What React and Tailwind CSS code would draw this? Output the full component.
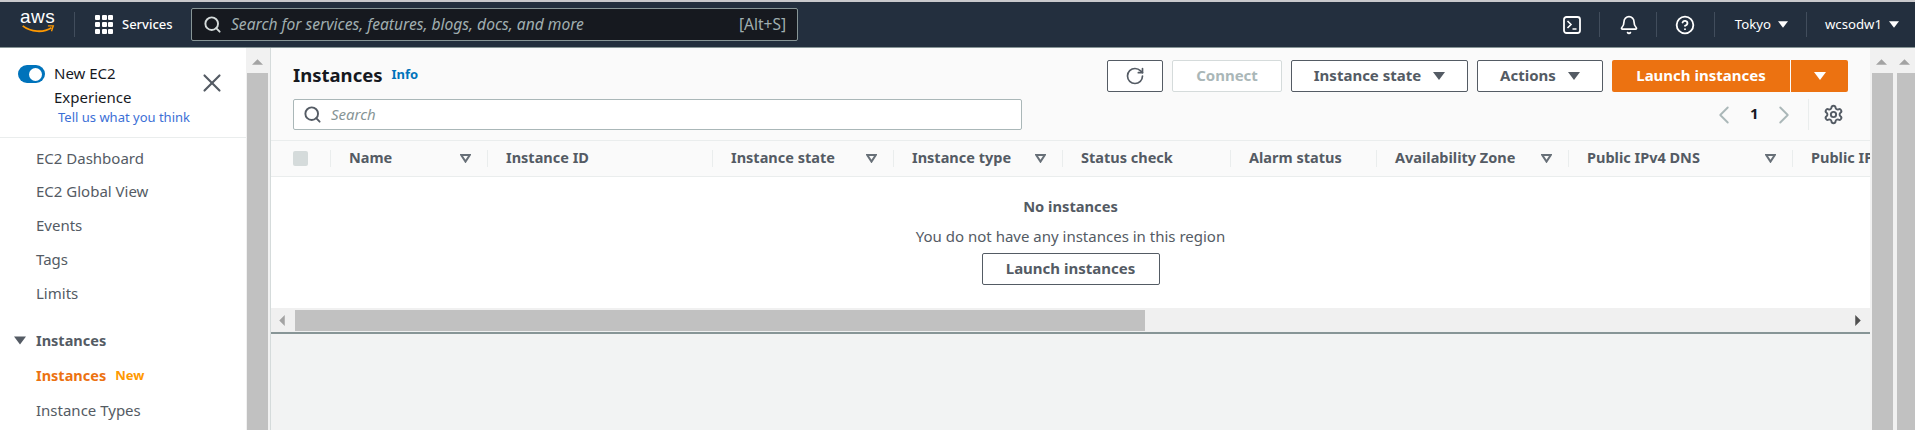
import { ChevronLeft, ChevronRight, Search, Settings, RotateCw, X, Bell, CircleHelp } from 'lucide-react'

const navLinks = ['EC2 Dashboard', 'EC2 Global View', 'Events', 'Tags', 'Limits']

const columns = [
  { label: 'Name', w: 'w-[157px]', filter: true },
  { label: 'Instance ID', w: 'w-[225px]' },
  { label: 'Instance state', w: 'w-[181px]', filter: true },
  { label: 'Instance type', w: 'w-[169px]', filter: true },
  { label: 'Status check', w: 'w-[168px]' },
  { label: 'Alarm status', w: 'w-[146px]' },
  { label: 'Availability Zone', w: 'w-[192px]', filter: true },
  { label: 'Public IPv4 DNS', w: 'w-[224px]', filter: true },
  { label: 'Public IPv4 address', w: 'w-[200px]' },
]

function Caret({ className = 'w-[12px] h-[8px] text-white' }) {
  return (
    <svg viewBox="0 0 12 8" className={className}>
      <path d="M0 0h12L6 8z" fill="currentColor" />
    </svg>
  )
}

function FilterCaret() {
  return (
    <svg viewBox="0 0 11 9" className="w-[11px] h-[9px] shrink-0">
      <path d="M1.2 1h8.6L5.5 7.6z" fill="none" stroke="#687078" strokeWidth="2" />
    </svg>
  )
}

function Scrollbar({ w, thumb, className = '' }) {
  return (
    <div className={`${w} ${className} shrink-0 flex flex-col`}>
      <div className="h-[25px] flex items-center justify-center pt-[2px]">
        <svg viewBox="0 0 12 6" className="w-[11px] h-[6px]">
          <path d="M6 0l6 6H0z" fill="#a3a3a3" />
        </svg>
      </div>
      <div className={`flex-1 ${thumb} bg-[#c1c1c1]`} />
    </div>
  )
}

function NavSep() {
  return <div className="w-px h-[25px] bg-[#414d5c]" />
}

function OutlineButton({ children, className = '' }) {
  return (
    <button className={`h-[32px] pb-[1px] border border-[#545b64] rounded-[2px] bg-white font-bold text-[#545b64] flex items-center justify-center ${className}`}>
      {children}
    </button>
  )
}

export default function App() {
  return (
    <div className="h-[430px] overflow-hidden flex flex-col font-['Noto_Sans',sans-serif] text-[15px] text-[#545b64] bg-[#f1f1f1]">
      <div className="h-[2px] bg-[#c9c9cc]" />

      {/* Top nav */}
      <header className="h-[46px] shrink-0 bg-[#232f3e] border-b border-[#879596] flex items-center text-white">
        <div className="w-[74px] pl-[20px] flex flex-col items-start">
          <span className="text-[19px] leading-[16px] font-['Liberation_Sans',sans-serif] tracking-[0.5px] -mt-[6px]">aws</span>
          <svg viewBox="0 0 36 10" className="w-[36px] h-[9px]">
            <path d="M1 1c9 7 23 8 32 2" fill="none" stroke="#ff9900" strokeWidth="2" />
            <path d="M29 1l6 0-2 6" fill="none" stroke="#ff9900" strokeWidth="1.5" />
          </svg>
        </div>
        <NavSep />
        <div className="ml-[20px] grid grid-cols-3 gap-[2px] w-[18px]">
          {Array.from({ length: 9 }).map((_, i) => (
            <div key={i} className="w-[5px] h-[5px] bg-white rounded-[1px]" />
          ))}
        </div>
        <span className="ml-[9px] text-[13px] font-medium w-[50px]">Services</span>
        <div className="ml-[19px] w-[607px] h-[33px] bg-[#16191f] border border-[#879596] rounded-[2px] flex items-center pl-[11px] pr-[11px]">
          <Search size={19} strokeWidth={2.4} className="text-[#d5dbdb]" />
          <span className="ml-[9px] italic text-[15.6px] text-[#a0aeb0]">Search for services, features, blogs, docs, and more</span>
          <span className="ml-auto text-[15.5px] text-[#a0aeb0]">[Alt+S]</span>
        </div>

        <div className="ml-auto flex items-center">
          <svg viewBox="0 0 18 18" className="w-[18px] h-[18px]">
            <rect x="1" y="1" width="16" height="16" rx="2.5" fill="none" stroke="#fff" strokeWidth="1.8" />
            <path d="M4.5 5l3.5 3.5-3.5 3.5M9.5 13h4" fill="none" stroke="#fff" strokeWidth="1.6" />
          </svg>
          <div className="ml-[18px]"><NavSep /></div>
          <Bell size={20} strokeWidth={2} className="ml-[19px]" />
          <div className="ml-[17px]"><NavSep /></div>
          <CircleHelp size={20} strokeWidth={2.2} className="ml-[18px]" />
          <div className="ml-[19px]"><NavSep /></div>
          <span className="ml-[20px] text-[13.2px]">Tokyo</span>
          <Caret className="ml-[7px] w-[10px] h-[7px] text-white" />
          <div className="ml-[18px]"><NavSep /></div>
          <span className="ml-[18px] text-[13.2px]">wcsodw1</span>
          <Caret className="ml-[7px] mr-[16px] w-[10px] h-[7px] text-white" />
        </div>
      </header>

      <div className="flex-1 flex min-h-0">
        {/* Sidebar */}
        <aside className="w-[246px] shrink-0 bg-white">
          <div className="h-[90px] border-b border-[#eaeded] relative">
            <div className="flex pl-[18px] pt-[17px]">
              <div className="w-[27px] h-[18px] rounded-full bg-[#0073bb] flex items-center justify-end pr-[3px]">
                <div className="w-[13px] h-[13px] rounded-full bg-white" />
              </div>
              <div className="ml-[9px] text-[#16191f] leading-[24px] -mt-[4px]">New EC2<br />Experience</div>
            </div>
            <X size={30} strokeWidth={1.7} className="absolute left-[197px] top-[20px] text-[#545b64]" />
            <div className="pl-[58px] text-[13px] leading-[18px] text-[#3b6fd6] -mt-[1px]">Tell us what you think</div>
          </div>
          <nav className="pt-[3px]">
            {navLinks.map(label => (
              <div key={label} className="h-[33.8px] pl-[36px] flex items-center">{label}</div>
            ))}
            <div className="mt-[14px] h-[34px] flex items-center font-bold text-[14.5px]">
              <Caret className="ml-[14px] w-[12px] h-[9px] text-[#545b64]" />
              <span className="ml-[10px]">Instances</span>
            </div>
            <div className="h-[35px] pl-[36px] flex items-center font-bold text-[14.5px] text-[#ec7211]">
              Instances
              <span className="ml-[9px] text-[13px] text-[#ff9900]">New</span>
            </div>
            <div className="h-[34px] pl-[36px] flex items-center">Instance Types</div>
          </nav>
        </aside>

        <Scrollbar w="w-[23px]" thumb="mx-px" />
        <div className="w-px shrink-0" />
        <div className="w-px shrink-0 bg-[#d5dbdb]" />

        {/* Main panel */}
        <main className="w-[1599px] shrink-0 flex flex-col bg-[#f2f3f3]">
          <div className="h-[93px] shrink-0 bg-[#fafafa] border-b border-[#eaeded] flex justify-between px-[22px] pt-[12px]">
            <div>
              <div className="h-[32px] flex items-center -mt-[1px]">
                <h1 className="text-[18.5px] font-bold text-[#16191f]">Instances</h1>
                <span className="ml-[9px] text-[13px] font-bold text-[#0073bb]">Info</span>
              </div>
              <div className="mt-[8px] w-[729px] h-[31px] bg-white border border-[#aab7b8] rounded-[2px] flex items-center pl-[9px]">
                <Search size={19} strokeWidth={2.4} className="text-[#545b64]" />
                <span className="ml-[9px] italic text-[#879596]">Search</span>
              </div>
            </div>
            <div className="flex flex-col items-end">
              <div className="flex">
                <OutlineButton className="w-[56px]"><RotateCw size={20} strokeWidth={2} /></OutlineButton>
                <button className="ml-[9px] w-[110px] h-[32px] pb-[1px] border border-[#d5dbdb] rounded-[2px] bg-white font-bold text-[#aab7b8]">Connect</button>
                <OutlineButton className="ml-[9px] w-[177px]">
                  Instance state
                  <Caret className="ml-[12px] w-[12px] h-[8px] text-[#545b64]" />
                </OutlineButton>
                <OutlineButton className="ml-[9px] w-[126px]">
                  Actions
                  <Caret className="ml-[12px] w-[12px] h-[8px] text-[#545b64]" />
                </OutlineButton>
                <button className="ml-[9px] w-[178px] h-[32px] pb-[1px] rounded-l-[2px] bg-[#ec7211] font-bold text-white">Launch instances</button>
                <button className="ml-px w-[57px] h-[32px] rounded-r-[2px] bg-[#ec7211] flex items-center justify-center">
                  <Caret className="w-[12px] h-[8px] text-white" />
                </button>
              </div>
              <div className="mt-[7px] flex items-center h-[31px] text-[#16191f] pr-[4px]">
                <ChevronLeft size={30} strokeWidth={1.5} className="text-[#aab7b8]" />
                <span className="mx-[11px] w-[8px] pb-[2px] font-bold text-center">1</span>
                <ChevronRight size={30} strokeWidth={1.5} className="text-[#aab7b8]" />
                <div className="ml-[9px] w-px h-[31px] bg-[#eaeded]" />
                <Settings size={21} strokeWidth={2.2} className="ml-[14px] text-[#545b64]" />
              </div>
            </div>
          </div>

          {/* Table header */}
          <div className="h-[36px] shrink-0 bg-[#fafafa] border-b border-[#eaeded] flex items-center overflow-hidden text-[14.5px]">
            <div className="w-[60px] shrink-0 pl-[22px] pr-[22px] h-[17px] border-r border-[#eaeded] flex items-center">
              <div className="w-[15px] h-[15px] bg-[#d5dbdb] rounded-[2px]" />
            </div>
            {columns.map(col => (
              <div key={col.label} className={`${col.w} shrink-0 h-[17px] pl-[18px] pr-[16px] border-r border-[#eaeded] flex items-center justify-between font-bold whitespace-nowrap`}>
                <span className="-mt-[1px]">{col.label}</span>
                {col.filter && <FilterCaret />}
              </div>
            ))}
          </div>

          {/* Empty state */}
          <div className="h-[131px] shrink-0 bg-white flex flex-col items-center pt-[19px]">
            <p className="h-[20px] leading-[20px] font-bold text-[14.7px]">No instances</p>
            <p className="mt-[10px] h-[20px] leading-[20px]">You do not have any instances in this region</p>
            <OutlineButton className="mt-[7px] w-[178px]">Launch instances</OutlineButton>
          </div>

          {/* Horizontal scrollbar */}
          <div className="h-[26px] shrink-0 bg-[#f0f0f0] border-b-2 border-[#879596] flex items-center pt-[1px]">
            <svg viewBox="0 0 6 12" className="ml-[8px] w-[6px] h-[11px]">
              <path d="M0 6l6-6v12z" fill="#a3a3a3" />
            </svg>
            <div className="ml-[10px] w-[850px] h-[21px] bg-[#c1c1c1]" />
            <svg viewBox="0 0 6 12" className="ml-auto mr-[9px] w-[6px] h-[11px]">
              <path d="M6 6L0 0v12z" fill="#505050" />
            </svg>
          </div>
        </main>

        <Scrollbar w="w-[23px]" thumb="ml-[2px]" />
        <Scrollbar w="w-[22px]" thumb="ml-[4px]" />
      </div>
    </div>
  )
}
